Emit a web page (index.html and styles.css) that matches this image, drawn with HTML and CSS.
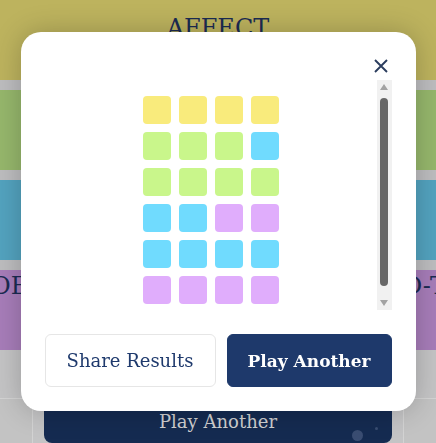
FILE: index.html
```html
<!DOCTYPE html>
<html lang="en">
<head>
<meta charset="utf-8">
<title>Results</title>
<link rel="stylesheet" href="styles.css">
</head>
<body>
<main class="board">
  <section class="solved yellow"><h2 class="cat-title">AFFECT</h2></section>
  <section class="solved green"></section>
  <section class="solved blue"></section>
  <section class="solved purple"><h2 class="cat-title split"><span>OE</span><span>D-T</span></h2></section>
  <div class="controls">
    <div class="ghost ghost-left"></div>
    <button class="play-bg">Play Another<span class="dot dot-small"></span><span class="dot dot-big"></span></button>
    <div class="ghost ghost-right"></div>
  </div>
</main>

<div class="overlay">
  <div class="modal">
    <div class="modal-head">
      <button class="close" aria-label="Close">
        <svg width="14" height="14" viewBox="0 0 14 14"><path d="M1 1 L13 13 M13 1 L1 13" stroke="#2b3d5e" stroke-width="1.9" stroke-linecap="butt" fill="none"/></svg>
      </button>
    </div>
    <div class="modal-body">
      <div class="scroll-content">
        <div class="grid">
          <span class="tile y"></span><span class="tile y"></span><span class="tile y"></span><span class="tile y"></span>
          <span class="tile g"></span><span class="tile g"></span><span class="tile g"></span><span class="tile b"></span>
          <span class="tile g"></span><span class="tile g"></span><span class="tile g"></span><span class="tile g"></span>
          <span class="tile b"></span><span class="tile b"></span><span class="tile p"></span><span class="tile p"></span>
          <span class="tile b"></span><span class="tile b"></span><span class="tile b"></span><span class="tile b"></span>
          <span class="tile p"></span><span class="tile p"></span><span class="tile p"></span><span class="tile p"></span>
        </div>
      </div>
      <div class="scrollbar">
        <span class="arrow arrow-up"></span>
        <span class="thumb"></span>
        <span class="arrow arrow-down"></span>
      </div>
    </div>
    <div class="actions">
      <button class="btn share">Share Results</button>
      <button class="btn play">Play Another</button>
    </div>
  </div>
</div>
</body>
</html>
```

FILE: styles.css
```css
* { box-sizing: border-box; }
html, body { margin: 0; padding: 0; }
body {
  width: 436px;
  height: 443px;
  overflow: hidden;
  background: #c4c4c5;
  font-family: "DejaVu Serif", "Liberation Serif", serif;
}

.board {
  display: flex;
  flex-direction: column;
  gap: 10px;
  background: #bdbdbf;
}
.solved {
  height: 80px;
  overflow: hidden;
}
.yellow { background: #bdb35e; }
.green { background: #96b76c; }
.blue { background: #53a3bf; }
.purple { background: #a77db9; }

.cat-title {
  margin: 0;
  font-size: 24px;
  font-weight: 400;
  color: #1b2b52;
  text-align: center;
  line-height: 28px;
  white-space: nowrap;
}
.yellow .cat-title { padding-top: 14px; }
.purple .cat-title { padding-top: 2px; }
.split {
  display: flex;
  justify-content: space-between;
  margin: 0 -10px 0 -9px;
}

.controls {
  display: grid;
  grid-template-columns: 1fr 348px 1fr;
  column-gap: 11px;
  align-items: start;
  padding-top: 48px;
  background: #c4c4c5;
  margin-top: -10px;
  height: 104px;
}
.ghost {
  height: 60px;
  border: 1px solid #d3d3d3;
  border-radius: 8px;
  background: #c3c3c3;
}
.ghost-left { margin-left: -20px; }
.ghost-right { margin-right: -20px; }

.play-bg {
  position: relative;
  margin-top: 2px;
  height: 43px;
  border: none;
  border-radius: 8px;
  background: #152b51;
  color: #cfcfd0;
  font-family: inherit;
  font-size: 18px;
  padding: 0;
  white-space: nowrap;
}
.dot {
  position: absolute;
  border-radius: 50%;
  background: #3a4d72;
}
.dot-small { width: 3px; height: 3px; right: 14px; top: 27px; }
.dot-big { width: 11px; height: 11px; right: 29px; top: 30px; }

.overlay {
  position: fixed;
  inset: 0;
  display: flex;
  align-items: center;
  justify-content: center;
}
.modal {
  width: 395px;
  background: #fff;
  border-radius: 20px;
  padding: 24px;
  box-shadow: 0 0 28px rgba(0, 0, 0, 0.22);
  display: flex;
  flex-direction: column;
}
.modal-head {
  height: 24px;
  display: flex;
  justify-content: flex-end;
  align-items: flex-start;
}
.close {
  width: 20px;
  height: 20px;
  padding: 0;
  border: none;
  background: none;
  display: flex;
  align-items: center;
  justify-content: center;
  margin-right: 1px;
}
.close svg { display: block; }

.modal-body {
  height: 230px;
  display: flex;
}
.scroll-content {
  flex: 1;
  padding-top: 16px;
  overflow: hidden;
}
.grid {
  display: grid;
  grid-template-columns: repeat(4, 28px);
  grid-auto-rows: 28px;
  gap: 8px;
  justify-content: center;
}
.tile { border-radius: 4px; }
.tile.y { background: #f9eb7c; }
.tile.g { background: #c9f68b; }
.tile.b { background: #70dbfe; }
.tile.p { background: #e0adfc; }

.scrollbar {
  width: 15px;
  background: #f1f1f1;
  display: flex;
  flex-direction: column;
  align-items: center;
  padding: 4px 0 4px;
}
.arrow {
  width: 0;
  height: 0;
  border-left: 4.5px solid transparent;
  border-right: 4.5px solid transparent;
}
.arrow-up { border-bottom: 6px solid #a3a3a3; }
.arrow-down { border-top: 6px solid #a3a3a3; }
.thumb {
  width: 8px;
  margin: 8px 0 14px;
  flex: 1;
  border-radius: 4px;
  background: #676767;
}

.actions {
  margin-top: 24px;
  display: flex;
  gap: 11px;
}
.btn {
  height: 53px;
  border-radius: 6px;
  font-family: inherit;
  font-size: 18px;
  padding: 0;
  white-space: nowrap;
}
.share {
  flex: 0 0 171px;
  background: #fff;
  border: 1px solid #e6e6e6;
  color: #1f3a6d;
}
.play {
  flex: 1 1 auto;
  background: #1e396b;
  border: 1px solid #1e396b;
  color: #fff;
  font-weight: 700;
  font-size: 17px;
}
```
